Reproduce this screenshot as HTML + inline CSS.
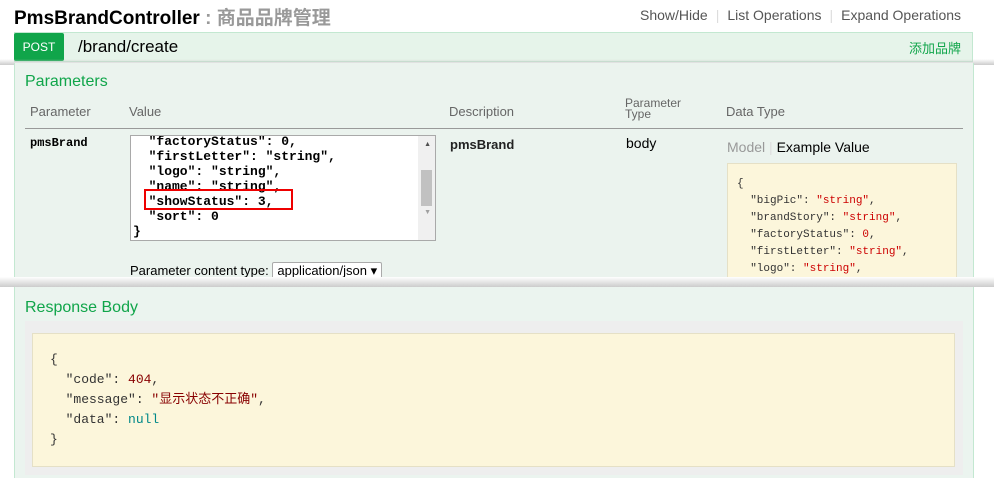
<!DOCTYPE html>
<html><head><meta charset="utf-8"><style>
*{margin:0;padding:0;box-sizing:border-box}
body{width:994px;height:478px;overflow:hidden;background:#fff;position:relative;font-family:"Liberation Sans","Noto Sans CJK SC",sans-serif}
.a{position:absolute;white-space:nowrap}
pre.a,pre{white-space:pre}
.mono{font-family:"Liberation Mono","Noto Sans CJK SC",monospace}
</style></head><body>
<div class="a" style="left:14px;top:3px;font-size:19px;font-weight:bold;color:#000">PmsBrandController <span style="color:#999">: 商品品牌管理</span></div>
<div class="a" style="left:640px;top:7px;font-size:14px;color:#555">Show/Hide<span style="color:#ddd;margin:0 8px">|</span>List Operations<span style="color:#ddd;margin:0 8px">|</span>Expand Operations</div>
<div class="a" style="left:14px;top:32px;width:959px;height:30px;background:#e6f4ea;border:1px solid #c3e8d1"></div>
<div class="a" style="left:14px;top:33px;width:50px;height:28px;background:#10a54a;border-radius:2px;color:#fff;font-size:12px;line-height:28px;text-align:center">POST</div>
<div class="a" style="left:78px;top:37px;font-size:17px;color:#000">/brand/create</div>
<div class="a" style="left:909px;top:38px;font-size:13px;color:#10a54a">添加品牌</div>
<div class="a" style="left:0;top:59px;width:994px;height:6px;background:linear-gradient(rgba(255,255,255,0),#ccc)"></div>
<div class="a" style="left:14px;top:63px;width:960px;height:220px;background:#ebf3ee;border-left:1px solid #c3e8d1;border-right:1px solid #c3e8d1"></div>
<div class="a" style="left:25px;top:73px;font-size:16px;color:#10a54a">Parameters</div>
<div class="a" style="left:30px;top:104px;font-size:13px;color:#666">Parameter</div>
<div class="a" style="left:129px;top:104px;font-size:13px;color:#666">Value</div>
<div class="a" style="left:449px;top:104px;font-size:13px;color:#666">Description</div>
<div class="a" style="left:625px;top:98px;font-size:12px;line-height:11px;color:#666">Parameter<br>Type</div>
<div class="a" style="left:726px;top:104px;font-size:13px;color:#666">Data Type</div>
<div class="a" style="left:25px;top:128px;width:938px;height:1px;background:#999"></div>
<div class="a mono" style="left:30px;top:136px;font-size:12px;font-weight:bold;color:#000">pmsBrand</div>
<div class="a" style="left:130px;top:135px;width:306px;height:106px;background:#fff;border:1px solid #a9a9a9;overflow:hidden">
 <pre class="a mono" style="left:2px;top:-2px;font-size:13px;line-height:15px;font-weight:bold;color:#000">  "factoryStatus": 0,
  "firstLetter": "string",
  "logo": "string",
  "name": "string",
  "showStatus": 3,
  "sort": 0
}</pre>
 <div class="a" style="right:0;top:0;width:17px;height:104px;background:#f0f0f0"></div>
 <div class="a" style="right:3px;top:34px;width:11px;height:36px;background:#c1c1c1"></div>
 <div class="a" style="right:4px;top:5px;font-size:7px;color:#505050">▲</div>
 <div class="a" style="right:4px;top:73px;font-size:7px;color:#a0a0a0">▼</div>
</div>
<div class="a" style="left:144px;top:189px;width:149px;height:21px;border:2px solid #e00"></div>
<div class="a" style="left:130px;top:262px;font-size:13px;color:#000">Parameter content type: <span style="display:inline-block;border:1px solid #aaa;background:#fff;padding:0 4px;border-radius:2px">application/json ▾</span></div>
<div class="a" style="left:450px;top:137px;font-size:13px;font-weight:bold;color:#222">pmsBrand</div>
<div class="a" style="left:626px;top:135px;font-size:14px;color:#000">body</div>
<div class="a" style="left:727px;top:139px;font-size:14px;color:#999">Model <span style="color:#ddd">|</span> <span style="color:#000">Example Value</span></div>
<div class="a" style="left:727px;top:163px;width:230px;height:125px;background:#fcf6db;border:1px solid #e5e0c6;overflow:hidden">
<pre class="a mono" style="left:9px;top:12px;font-size:11px;line-height:17px;color:#333">{
  "bigPic": <span style="color:#c00">"string"</span>,
  "brandStory": <span style="color:#c00">"string"</span>,
  "factoryStatus": <span style="color:#c00">0</span>,
  "firstLetter": <span style="color:#c00">"string"</span>,
  "logo": <span style="color:#c00">"string"</span>,
  "name": <span style="color:#c00">"string"</span></pre>
</div>
<div class="a" style="left:0;top:277px;width:994px;height:10px;background:linear-gradient(#fff,#ccc);"></div>
<div class="a" style="left:14px;top:287px;width:960px;height:191px;background:#ebf4ef;border-left:1px solid #c3e8d1;border-right:1px solid #c3e8d1"></div>
<div class="a" style="left:25px;top:299px;font-size:16px;color:#10a54a">Response Body</div>
<div class="a" style="left:25px;top:321px;width:938px;height:154px;background:#eeeeee"></div>
<div class="a" style="left:32px;top:333px;width:923px;height:134px;background:#fcf6db;border:1px solid #e5e0c6"></div>
<pre class="a mono" style="left:50px;top:350px;font-size:13px;line-height:20px;color:#333">{
  "code": <span style="color:#800">404</span>,
  "message": <span style="color:#800">"显示状态不正确"</span>,
  "data": <span style="color:#088">null</span>
}</pre>
</body></html>
